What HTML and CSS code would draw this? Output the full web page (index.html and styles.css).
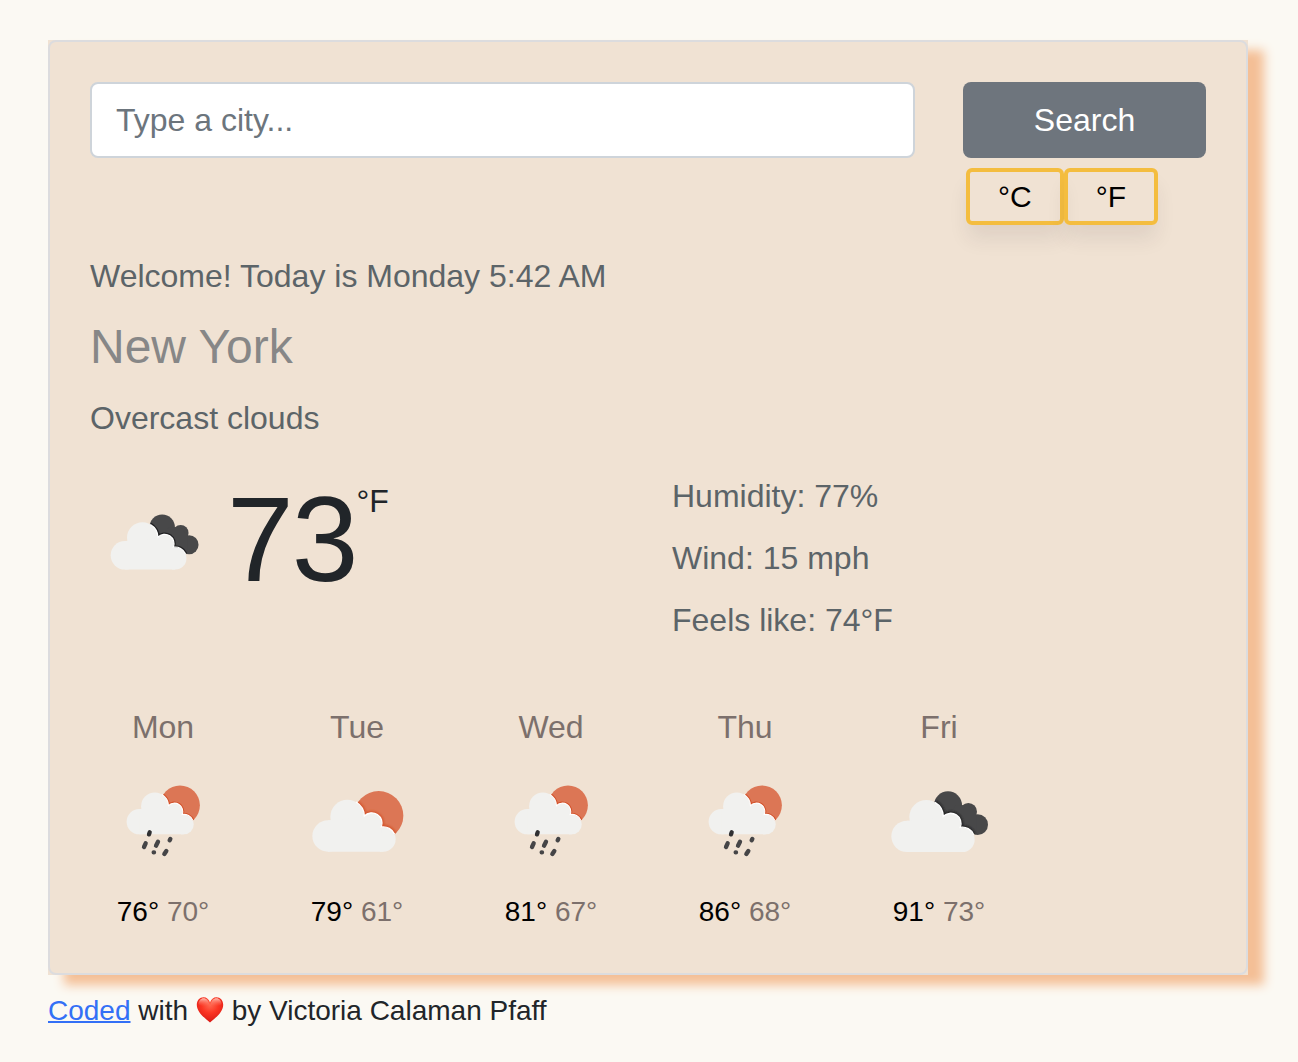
FILE: index.html
```html
<!DOCTYPE html>
<html lang="en">
<head>
<meta charset="utf-8">
<title>Weather</title>
<link rel="stylesheet" href="styles.css">
</head>
<body>
<svg class="sprite" width="0" height="0" aria-hidden="true">
  <defs>
    <filter id="soft" x="-20%" y="-20%" width="140%" height="140%"><feGaussianBlur stdDeviation="2.5"/></filter>
    <radialGradient id="heartFill" cx=".5" cy=".3" r=".65">
      <stop offset="0" stop-color="#ff6a52"/><stop offset=".5" stop-color="#fb3523"/><stop offset="1" stop-color="#dc1d16"/>
    </radialGradient>
    <linearGradient id="heartShine" x1="0" y1="0" x2="0" y2="1">
      <stop offset="0" stop-color="#ffd0c4" stop-opacity=".9"/><stop offset="1" stop-color="#ff7560" stop-opacity="0"/>
    </linearGradient>
    <path id="edge" d="M-12 97A51 51 0 0 1 13 139A31 31 0 0 1 64 172A37 37 0 0 1 104 194" fill="none"/>
    <g id="cloud">
      <circle cx="-96" cy="199" r="47"/><circle cx="-38" cy="141" r="51"/>
      <circle cx="35" cy="160.500" r="31"/><circle cx="70" cy="209" r="37"/>
      <path d="M-96 152L-60 150L34 140L64 176V246H-96Z"/><path d="M60 246H70V190H60Z"/>
    </g>
    <g id="dark">
      <circle cx="27" cy="106" r="42"/><circle cx="88" cy="125" r="26"/><circle cx="116" cy="164" r="31"/>
      <path d="M50 106H88L112 134V194L60 170L20 140Z"/>
    </g>
    <clipPath id="darkClip"><circle cx="27" cy="106" r="42"/><circle cx="88" cy="125" r="26"/><circle cx="116" cy="164" r="31"/>
      <path d="M50 106H88L112 134V194L60 170L20 140Z"/></clipPath>
    <clipPath id="sunClip"><circle cx="56" cy="138" r="74"/></clipPath>
    <symbol id="overcast" viewBox="-165 0 330 300">
      <use href="#dark" fill="#484849"/>
      <g clip-path="url(#darkClip)"><use href="#edge" stroke="#202022" stroke-width="12" filter="url(#soft)"/></g>
      <use href="#cloud" fill="#f1f1ef"/>
      <use href="#edge" stroke="#fff" stroke-width="4"/>
    </symbol>
    <g id="sunCloud">
      <circle cx="56" cy="138" r="74" fill="#dc7655"/>
      <g clip-path="url(#sunClip)"><use href="#edge" stroke="#d4522b" stroke-width="12" filter="url(#soft)"/></g>
      <use href="#cloud" fill="#f1f1ef"/>
      <use href="#edge" stroke="#fff" stroke-width="4"/>
    </g>
    <symbol id="partly" viewBox="-165 0 330 300"><use href="#sunCloud" x="9" y="-1"/></symbol>
    <symbol id="rain" viewBox="-165 0 330 300">
      <use href="#sunCloud" transform="translate(6 -5) scale(.805)"/>
      <g stroke="#454547" stroke-width="13" stroke-linecap="round">
        <path d="M-40 187L-42 193" stroke="#303032"/><path d="M-52 220L-57 231M-15 215L-21 227M22 207L20 211M-28 247H-27M10 243L4 252"/>
      </g>
    </symbol>
  </defs>
</svg>
<main class="app">
  <div class="panel">
    <div class="card">
      <form class="search">
        <input class="city-input" type="text" placeholder="Type a city...">
        <button class="submit" type="button">Search</button>
      </form>
      <div class="units"><button class="unit" type="button">°C</button><button class="unit" type="button">°F</button></div>
      <p class="date">Welcome! Today is Monday 5:42 AM</p>
      <h1 class="city">New York</h1>
      <p class="description">Overcast clouds</p>
      <div class="current">
        <div class="now">
          <svg class="now-icon"><use href="#overcast"/></svg>
          <span class="temperature">73</span><span class="degree">°F</span>
        </div>
        <ul class="details">
          <li>Humidity: 77%</li>
          <li>Wind: 15 mph</li>
          <li>Feels like: 74°F</li>
        </ul>
      </div>
      <div class="forecast">
        <div class="day"><div class="name">Mon</div><svg class="icon"><use href="#rain"/></svg><div class="range"><span class="high">76°</span> <span>70°</span></div></div>
        <div class="day"><div class="name">Tue</div><svg class="icon"><use href="#partly"/></svg><div class="range"><span class="high">79°</span> <span>61°</span></div></div>
        <div class="day"><div class="name">Wed</div><svg class="icon"><use href="#rain"/></svg><div class="range"><span class="high">81°</span> <span>67°</span></div></div>
        <div class="day"><div class="name">Thu</div><svg class="icon"><use href="#rain"/></svg><div class="range"><span class="high">86°</span> <span>68°</span></div></div>
        <div class="day"><div class="name">Fri</div><svg class="icon"><use href="#overcast"/></svg><div class="range"><span class="high">91°</span> <span>73°</span></div></div>
      </div>
    </div>
  </div>
  <footer class="credit"><a href="#">Coded</a> with <svg class="heart" viewBox="0 0 28 28"><path d="M14 26.5C9 22 .8 16.500.8 8.700C.8 4.200 3.800 1.200 7.500 1.200C10.500 1.200 13 3.200 14 6.200C15 3.200 17.500 1.200 20.500 1.200C24.200 1.200 27.200 4.200 27.200 8.700C27.200 16.500 19 22 14 26.500Z" fill="url(#heartFill)"/><path d="M2.500 8C2.500 4.500 5 2.200 7.500 2.200C10.500 2.200 12.500 4.500 13.200 8C11 11 5 11 2.500 8ZM14.800 8C15.500 4.500 17.500 2.200 20.500 2.200C23 2.200 25.500 4.500 25.500 8C23 11 17 11 14.800 8Z" fill="url(#heartShine)"/></svg> by Victoria Calaman Pfaff</footer>
</main>
</body>
</html>
```
FILE: styles.css
```css
* { box-sizing: border-box; }

body {
  margin: 0;
  background: #fbf9f3;
  color: #212529;
  font: 32px/48px "Liberation Sans", Arial, sans-serif;
}

p, h1, ul { margin: 0; padding: 0; }
button, input { font: inherit; }

.sprite { display: block; }

.app { padding: 40px 50px 0 48px; }

.panel {
  height: 935px;
  background: #f0e2d3;
  box-shadow: 16px 10px 10px #f4bf96;
}

.card {
  height: 100%;
  padding: 40px;
  border: 2px solid #dcdcde;
  border-radius: 8px;
}

.search { display: flex; gap: 48px; }

.city-input {
  flex: 1;
  min-width: 0;
  height: 76px;
  padding: 12px 24px;
  border: 2px solid #ced4da;
  border-radius: 8px;
  background: #fff;
}

.city-input::placeholder { color: #6c757d; opacity: 1; }

.submit {
  width: 243px;
  border: 0;
  border-radius: 8px;
  background: #6e757d;
  color: #fff;
}

.units { display: flex; margin: 10px 0 27px 876px; }

.unit {
  height: 57px;
  padding: 1px 28px 0;
  border: 4px solid #f4bd3f;
  border-radius: 6px;
  background: transparent;
  color: #000;
  font-size: 30px;
  line-height: 48px;
  box-shadow: 0 16px 20px -2px rgba(60, 40, 60, .09);
}

.date, .description, .details { color: #5c6468; }

.city {
  margin: 18px 0 18px;
  color: #878787;
  font-size: 48px;
  font-weight: 400;
  line-height: 58px;
}

.current { display: flex; margin-top: 30px; height: 172px; }

.now { display: flex; align-items: flex-start; width: 582px; padding-left: 14px; }

.now-icon { width: 100px; height: 91px; margin-top: 23px; }

.temperature { margin-top: -3px; margin-left: 23px; font-size: 120px; line-height: 140px; letter-spacing: -2px; }

.degree { margin-top: 5px; }

.details { list-style: none; }
.details li { margin-bottom: 14px; }

.forecast {
  display: flex;
  gap: 48px;
  margin-top: 59px;
  color: #7c706c;
}

.day { display: flex; flex-direction: column; align-items: center; width: 146px; }

.icon { width: 110px; height: 100px; margin: 19px 0 21px; }

.range { font-size: 28px; line-height: 42px; }

.high { color: #000; }

.credit { margin-top: 15px; font-size: 28px; line-height: 42px; }
.credit a { color: #3370f6; text-decoration-thickness: 2px; }

.heart { width: 28px; height: 28px; vertical-align: -4px; }
```
